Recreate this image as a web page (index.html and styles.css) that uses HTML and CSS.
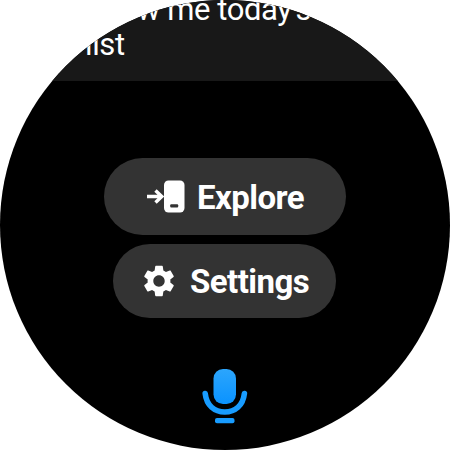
FILE: index.html
```html
<!DOCTYPE html>
<html lang="en">
<head>
<meta charset="utf-8">
<title>Assistant</title>
<link rel="stylesheet" href="styles.css">
</head>
<body>
<main class="watch">
  <section class="suggestion">Show me today's<br>list</section>
  <nav class="actions">
    <button class="pill explore">
      <svg width="38" height="34" viewBox="0 0 38 34">
        <path d="M0 16.5H14M8.5 10.5L14.8 16.5L8.5 22.5" fill="none" stroke="#fff" stroke-width="3.4"/>
        <rect x="17" y="0.5" width="20.5" height="32" rx="4.5" fill="#fff"/>
        <rect x="23.2" y="24.3" width="8" height="3.2" rx="1" fill="#333"/>
      </svg>
      <span>Explore</span>
    </button>
    <button class="pill settings">
      <svg width="38" height="38" viewBox="0 0 24 24">
        <path fill="#fff" d="M19.14 12.94c.04-.3.06-.61.06-.94 0-.32-.02-.64-.07-.94l2.03-1.58c.18-.14.23-.41.12-.61l-1.92-3.32c-.12-.22-.37-.29-.59-.22l-2.39.96c-.5-.38-1.03-.7-1.62-.94l-.36-2.54c-.04-.24-.24-.41-.48-.41h-3.84c-.24 0-.43.17-.47.41l-.36 2.54c-.59.24-1.13.57-1.62.94l-2.39-.96c-.22-.08-.47 0-.59.22L2.74 8.87c-.12.21-.08.47.12.61l2.03 1.58c-.05.3-.09.63-.09.94s.02.64.07.94l-2.03 1.58c-.18.14-.23.41-.12.61l1.92 3.32c.12.22.37.29.59.22l2.39-.96c.5.38 1.03.7 1.62.94l.36 2.54c.05.24.24.41.48.41h3.84c.24 0 .44-.17.47-.41l.36-2.54c.59-.24 1.13-.56 1.62-.94l2.39.96c.22.08.47 0 .59-.22l1.92-3.32c.12-.22.07-.47-.12-.61l-2.01-1.58zM12 15.6c-1.98 0-3.6-1.62-3.6-3.6s1.62-3.6 3.6-3.6 3.6 1.62 3.6 3.6-1.62 3.6-3.6 3.6z"/>
      </svg>
      <span>Settings</span>
    </button>
  </nav>
  <svg class="mic" width="46" height="56" viewBox="0 0 46 56">
    <defs>
      <linearGradient id="blue" x1="0" y1="0" x2="0" y2="1">
        <stop offset="0" stop-color="#2ca5fc"/>
        <stop offset="1" stop-color="#0a93ff"/>
      </linearGradient>
    </defs>
    <rect x="11.5" y="1" width="22.5" height="35" rx="9.5" fill="url(#blue)"/>
    <path d="M3.2 25.5C4.5 37.5 12.5 44 22.8 44S41.1 37.5 42.4 25.5" fill="none" stroke="#189cff" stroke-width="5.6" stroke-linecap="round"/>
    <rect x="13" y="50" width="19.5" height="5.2" rx="2" fill="#189cff"/>
  </svg>
</main>
</body>
</html>
```

FILE: styles.css
```css
body {
  margin: 0;
  background: #fff;
}

.watch {
  width: 450px;
  height: 450px;
  border-radius: 50%;
  overflow: hidden;
  background: #000;
  display: flex;
  flex-direction: column;
  align-items: center;
  font-family: Roboto, sans-serif;
  color: #fff;
}

.suggestion {
  box-sizing: border-box;
  width: 100%;
  height: 81px;
  padding-left: 85px;
  background: #181818;
  font-size: 31px;
  line-height: 35px;
  letter-spacing: -0.4px;
}

.suggestion::before {
  content: "";
  display: block;
  margin-top: -8px;
}

.actions {
  display: flex;
  flex-direction: column;
  align-items: center;
  gap: 9px;
  margin-top: 77px;
}

.pill {
  box-sizing: border-box;
  display: flex;
  align-items: center;
  border: 0;
  border-radius: 39px;
  background: #333;
  color: #fff;
  font: bold 33px/39px Roboto, sans-serif;
  letter-spacing: -0.55px;
}

.explore {
  width: 242px;
  height: 77px;
  padding: 0 0 0 43px;
  gap: 12px;
}

.explore span {
  padding-top: 2px;
}

.settings {
  width: 223px;
  height: 74px;
  margin-right: 1px;
  padding: 0 0 0 27px;
  gap: 12px;
}

.settings span {
  padding-top: 1px;
}

.mic {
  margin: 50px 1px 0 0;
}
```
